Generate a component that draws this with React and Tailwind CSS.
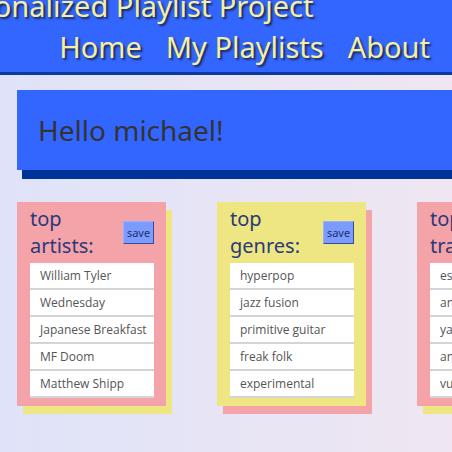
import React from 'react'

const cards = [
  {
    title: ['top', 'artists:'],
    bg: 'bg-[#f4a3a8]',
    shadow: 'shadow-[6px_8px_0_#ede683]',
    items: ['William Tyler', 'Wednesday', 'Japanese Breakfast', 'MF Doom', 'Matthew Shipp'],
  },
  {
    title: ['top', 'genres:'],
    bg: 'bg-[#ede683]',
    shadow: 'shadow-[6px_8px_0_#f4a3a8]',
    items: ['hyperpop', 'jazz fusion', 'primitive guitar', 'freak folk', 'experimental'],
  },
  {
    title: ['top', 'tracks:'],
    bg: 'bg-[#f4a3a8]',
    shadow: 'shadow-[6px_8px_0_#ede683]',
    items: ['espresso', 'angel', 'yankee', 'andromeda', 'vultures'],
  },
]

function Card({ card }) {
  return (
    <div className={`w-[149px] shrink-0 ${card.bg} ${card.shadow} pl-[13px] pr-[12px] pt-[3px] pb-[8px]`}>
      <div className="flex justify-between items-start">
        <h2 className="font-['Noto_Sans',sans-serif] text-[20px] leading-[27px] text-[#2b3a78]">
          {card.title[0]}
          <br />
          {card.title[1]}
        </h2>
        <button className="mt-[16px] w-[31px] h-[23px] bg-[#7b9bff] border border-[#3b4a9a] border-t-[#9ab0ff] border-l-[#9ab0ff] text-[11px] leading-none text-[#23306e] font-['Noto_Sans',sans-serif]">
          save
        </button>
      </div>
      <ul className="mt-[4px]">
        {card.items.map((item) => (
          <li
            key={item}
            className="h-[27px] bg-white border-b-2 border-[#d4d4d4] pl-[10px] flex items-center text-[12px] text-[#555] font-['Open_Sans',sans-serif] whitespace-nowrap overflow-hidden"
          >
            {item}
          </li>
        ))}
      </ul>
    </div>
  )
}

export default function App() {
  return (
    <div className="w-[452px] h-[452px] overflow-hidden bg-linear-to-r from-[#dfe3f9] to-[#efe6f1] font-['Noto_Sans',sans-serif]">
      <header className="h-[75px] bg-[#3366ff] border-b-[3px] border-[#0b3a9e] flex flex-col">
        <h1 className="-mt-[13px] -ml-[66px] whitespace-nowrap text-[29px] leading-[38px] text-[#f4efa2] [text-shadow:2px_2px_2px_#1e2a55]">
          Personalized Playlist Project
        </h1>
        <nav className="mt-[3px] flex justify-end gap-[24px] pr-[22px] text-[29px] leading-[38px] text-[#f4efa2] [text-shadow:2px_2px_2px_#1e2a55]">
          <a>Home</a>
          <a>My Playlists</a>
          <a>About</a>
        </nav>
      </header>

      <div className="ml-[17px] mt-[15px] h-[80px] bg-[#3366ff] shadow-[5px_9px_0_#003399] flex items-center pl-[21px]">
        <p className="text-[28px] text-[#333] font-['Noto_Sans',sans-serif]">Hello michael!</p>
      </div>

      <div className="flex gap-[51px] ml-[17px] mt-[32px]">
        {cards.map((card, i) => (
          <Card key={i} card={card} />
        ))}
      </div>
    </div>
  )
}
